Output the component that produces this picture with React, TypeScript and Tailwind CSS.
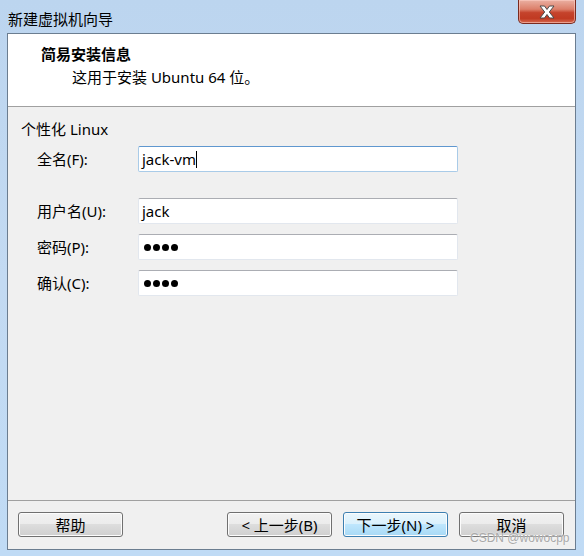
const font = "font-['Segoe_UI','Noto_Sans','Noto_Sans_CJK_SC',sans-serif]";

const CloseButton = () => {
	return (
		<div className="mr-[8px] w-[58px] h-[24px] rounded-b-[5px] border border-t-0 border-[#7a2a1e] bg-[linear-gradient(180deg,#eab0a2_0%,#dc7f6a_40%,#c5432c_55%,#c03a22_80%,#d6694e_100%)] shadow-[inset_0_0_0_1px_rgba(255,210,200,0.55)] flex items-center justify-center">
			<svg width="18" height="14" viewBox="0 0 18 14">
				<path
					d="M2 1 H6.5 L9 4.5 L11.5 1 H16 L11.3 7 L16 13 H11.5 L9 9.5 L6.5 13 H2 L6.7 7 Z"
					fill="#ffffff"
					stroke="#4a4a4a"
					strokeWidth="1"
					strokeLinejoin="round"
				/>
			</svg>
		</div>
	);
};

const Field = ({
	label,
	focused,
	children,
	className,
}: {
	label: string;
	focused?: boolean;
	children: React.ReactNode;
	className?: string;
}) => {
	return (
		<div className={`flex items-center pl-[16px] ${className ?? ""}`}>
			<div className="w-[101px] text-[15px] leading-[20px] text-black">{label}</div>
			<div
				className={
					focused
						? "w-[320px] h-[26px] bg-white rounded-[2px] border border-[#a9cbe8] border-t-[#5f97cf] flex items-center pl-[3px]"
						: "w-[320px] h-[26px] bg-white rounded-[2px] border border-[#e2e7ee] border-t-[#abadb3] flex items-center pl-[3px]"
				}
			>
				{children}
			</div>
		</div>
	);
};

const Dots = () => {
	return (
		<div className="flex items-center gap-[2px] pl-[2px]">
			<span className="w-[7px] h-[7px] rounded-full bg-black" />
			<span className="w-[7px] h-[7px] rounded-full bg-black" />
			<span className="w-[7px] h-[7px] rounded-full bg-black" />
			<span className="w-[7px] h-[7px] rounded-full bg-black" />
		</div>
	);
};

const Button = ({ text, primary }: { text: string; primary?: boolean }) => {
	return (
		<div
			className={
				primary
					? "w-[105px] h-[25px] rounded-[3px] border border-[#3c7fb1] bg-[linear-gradient(180deg,#eaf6fd_0%,#d9f0fc_50%,#bee6fd_50%,#a7d9f5_100%)] shadow-[inset_0_0_0_1px_#fcfcfc] flex items-center justify-center text-[15px] leading-[20px] text-black"
					: "w-[105px] h-[25px] rounded-[3px] border border-[#707070] bg-[linear-gradient(180deg,#f2f2f2_0%,#ebebeb_50%,#dddddd_50%,#cfcfcf_100%)] shadow-[inset_0_0_0_1px_#fcfcfc] flex items-center justify-center text-[15px] leading-[20px] text-black"
			}
		>
			{text}
		</div>
	);
};

export default function App() {
	return (
		<div
			className={`${font} relative w-[584px] h-[556px] overflow-hidden flex flex-col bg-[linear-gradient(180deg,#bcd5ef_0%,#c3daf2_50%,#c0dbf5_100%)]`}
		>
			{/* title bar */}
			<div className="h-[33px] flex items-start justify-between">
				<div className="ml-[8px] mt-[9px] text-[15px] leading-[20px] text-black">新建虚拟机向导</div>
				<CloseButton />
			</div>

			{/* client area */}
			<div className="ml-[7px] mr-[8px] mb-[6px] flex-1 flex flex-col border border-[#6b7d90] bg-[#f0f0f0]">
				<div className="h-[73px] bg-white border-b border-[#a0a0a0] pt-[10px]">
					<div className="pl-[33px] text-[15px] leading-[20px] font-bold text-black">简易安装信息</div>
					<div className="pl-[64px] mt-[3px] text-[15px] leading-[20px] text-black">
						这用于安装 Ubuntu 64 位。
					</div>
				</div>

				<div className="flex-1 pt-[12px] pl-[13px]">
					<div className="text-[15px] leading-[20px] text-black">个性化 Linux</div>
					<Field label="全名(F):" focused className="mt-[7px]">
						<span className="text-[15px] leading-[20px] text-black">jack-vm</span>
						<span className="w-[1px] h-[17px] bg-black" />
					</Field>
					<Field label="用户名(U):" className="mt-[26px]">
						<span className="text-[15px] leading-[20px] text-black">jack</span>
					</Field>
					<Field label="密码(P):" className="mt-[10px]">
						<Dots />
					</Field>
					<Field label="确认(C):" className="mt-[10px]">
						<Dots />
					</Field>
				</div>

				<div className="h-[49px] border-t border-[#a0a0a0] pt-[11px] pl-[10px] pr-[11px] flex items-start justify-between">
					<Button text="帮助" />
					<div className="flex gap-[11px]">
						<Button text="< 上一步(B)" />
						<Button text="下一步(N) >" primary />
						<Button text="取消" />
					</div>
				</div>
			</div>

			{/* watermark */}
			<div className="absolute left-[470px] top-[531px] font-['Liberation_Sans',Arial,sans-serif] text-[12px] leading-[14px] text-[#a9a9a9] [text-shadow:0_0_2px_rgba(255,255,255,0.9)]">
				CSDN @wowocpp
			</div>
		</div>
	);
}
